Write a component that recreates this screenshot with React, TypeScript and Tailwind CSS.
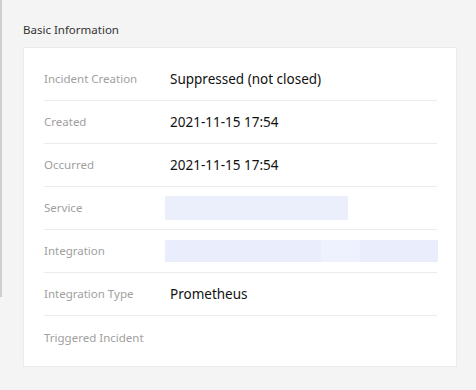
const rows: { label: string; value?: string; bar?: "short" | "long" }[] = [
  { label: "Incident Creation", value: "Suppressed (not closed)" },
  { label: "Created", value: "2021-11-15 17:54" },
  { label: "Occurred", value: "2021-11-15 17:54" },
  { label: "Service", bar: "short" },
  { label: "Integration", bar: "long" },
  { label: "Integration Type", value: "Prometheus" },
  { label: "Triggered Incident" },
]

export default function App() {
  return (
    <div className="relative w-[476px] h-[390px] bg-[#f4f4f4] font-['Noto_Sans',sans-serif] overflow-hidden">
      <div className="absolute left-0 top-0 w-[2px] h-[297px] bg-[#cfcfcf]" />
      <div className="pl-[23px] pr-[19px] pt-[20px]">
        <h2 className="text-[11.5px] leading-[20px] text-[#333]">Basic Information</h2>
        <div className="mt-[7px] bg-white border border-[#ebebeb] pl-[20px] pr-[19px] pt-[10px] h-[320px]">
          {rows.map((r, i) => (
            <div
              key={r.label}
              className={`flex items-center h-[43px] ${i < rows.length - 1 ? "border-b border-[#ebebeb]" : ""}`}
            >
              <div className="w-[121px] shrink-0 text-[11.5px] text-[#a0a0a0]">{r.label}</div>
              {r.value && <div className="pl-[5px] text-[13.5px] text-[#111]">{r.value}</div>}
              {r.bar === "short" && <div className="w-[183px] h-[24px] bg-[#ebeffc]" />}
              {r.bar === "long" && (
                <div className="flex shrink-0 w-[273px] h-[22px]">
                  <div className="w-[156px] bg-[#eaeefc]" />
                  <div className="w-[39px] bg-[#eef2fe]" />
                  <div className="flex-1 bg-[#eaeefc]" />
                </div>
              )}
            </div>
          ))}
        </div>
      </div>
    </div>
  )
}
